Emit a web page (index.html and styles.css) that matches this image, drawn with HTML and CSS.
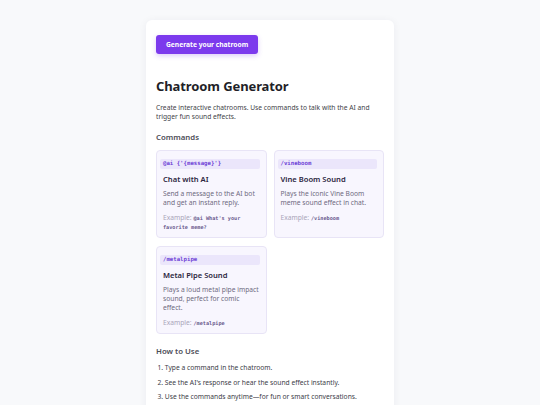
FILE: index.html
```html
<!DOCTYPE html>
<html lang="en">
<head>
<meta charset="utf-8">
<title>Chatroom Generator</title>
<link rel="stylesheet" href="styles.css">
</head>
<body>
<div class="page">
  <main class="panel">
    <button class="generate-btn">Generate your chatroom</button>
    <h1 class="title">Chatroom Generator</h1>
    <p class="intro">Create interactive chatrooms. Use commands to talk with the AI and trigger fun sound effects.</p>
    <h2 class="section-title">Commands</h2>
    <div class="command-grid">
      <div class="command-card">
        <code class="command-tag">@ai {'{message}'}</code>
        <h3 class="command-name">Chat with AI</h3>
        <p class="command-desc">Send a message to the AI bot and get an instant reply.</p>
        <p class="command-example">Example: <code class="example-code">@ai What's your favorite meme?</code></p>
      </div>
      <div class="command-card">
        <code class="command-tag">/vineboom</code>
        <h3 class="command-name">Vine Boom Sound</h3>
        <p class="command-desc">Plays the iconic Vine Boom meme sound effect in chat.</p>
        <p class="command-example">Example: <code class="example-code">/vineboom</code></p>
      </div>
      <div class="command-card">
        <code class="command-tag">/metalpipe</code>
        <h3 class="command-name">Metal Pipe Sound</h3>
        <p class="command-desc">Plays a loud metal pipe impact sound, perfect for comic effect.</p>
        <p class="command-example">Example: <code class="example-code">/metalpipe</code></p>
      </div>
    </div>
    <h2 class="section-title how">How to Use</h2>
    <ol class="steps">
      <li>Type a command in the chatroom.</li>
      <li>See the AI's response or hear the sound effect instantly.</li>
      <li>Use the commands anytime—for fun or smart conversations.</li>
    </ol>
  </main>
</div>
</body>
</html>
```
FILE: styles.css
```css
* { box-sizing: border-box; }
html, body {
  margin: 0;
  padding: 0;
  background: #f8f9fb;
  font-family: "Noto Sans", "Open Sans", sans-serif;
}
.page {
  display: flex;
  justify-content: center;
  padding-top: 20px;
  height: 405px;
  overflow: hidden;
}
.panel {
  width: 248px;
  background: #ffffff;
  border-radius: 6px;
  box-shadow: 0 1px 8px rgba(30, 30, 60, 0.06);
  padding: 15px 10px 20px;
  min-height: 420px;
}
.generate-btn {
  display: block;
  height: 19px;
  padding: 0 10px;
  border: 0;
  border-radius: 3px;
  background: #7c3aed;
  color: #ffffff;
  font-family: inherit;
  font-size: 6.7px;
  font-weight: 700;
  box-shadow: 0 2px 5px rgba(124, 58, 237, 0.25);
}
.title {
  margin: 23px 0 0;
  font-size: 13px;
  line-height: 18px;
  font-weight: 700;
  letter-spacing: -0.1px;
  color: #1f1f28;
}
.intro {
  margin: 7.5px 0 0;
  font-size: 6.7px;
  line-height: 9.4px;
  color: #3f3f48;
}
.section-title {
  margin: 11px 0 0;
  font-size: 7.8px;
  line-height: 10px;
  font-weight: 600;
  color: #4d4d57;
}
.command-grid {
  margin-top: 8px;
  display: grid;
  grid-template-columns: 1fr 1fr;
  gap: 8px 7px;
}
.command-card {
  background: #f8f6fe;
  border: 1px solid #e8e4f6;
  border-radius: 4px;
  padding: 8px 6px 6px 6px;
}
.command-tag {
  display: block;
  margin-left: -3px;
  padding: 0 3px;
  height: 9.4px;
  line-height: 9.4px;
  background: #ebe6fb;
  border-radius: 2px;
  font-family: "DejaVu Sans Mono", monospace;
  font-size: 5.7px;
  font-weight: 700;
  color: #6d3fd6;
}
.command-name {
  margin: 5px 0 0;
  font-size: 7.6px;
  line-height: 11px;
  font-weight: 600;
  color: #2b2540;
}
.command-desc {
  margin: 4.5px 0 0;
  font-size: 6.7px;
  line-height: 9px;
  color: #6e6a80;
}
.command-example {
  margin: 5.5px 0 0;
  font-size: 6.7px;
  line-height: 9.3px;
  color: #a9a5b9;
}
.example-code {
  font-family: "DejaVu Sans Mono", monospace;
  font-size: 5.2px;
  line-height: 1;
  font-weight: 700;
  color: #6b5b8e;
}
.how {
  margin-top: 12.5px;
}
.steps {
  margin: 7px 0 0;
  padding: 0 0 0 1.5px;
  list-style-position: inside;
  font-size: 6.7px;
  line-height: 9.5px;
  color: #3c3c47;
}
.steps li {
  margin-bottom: 4.8px;
}
```
